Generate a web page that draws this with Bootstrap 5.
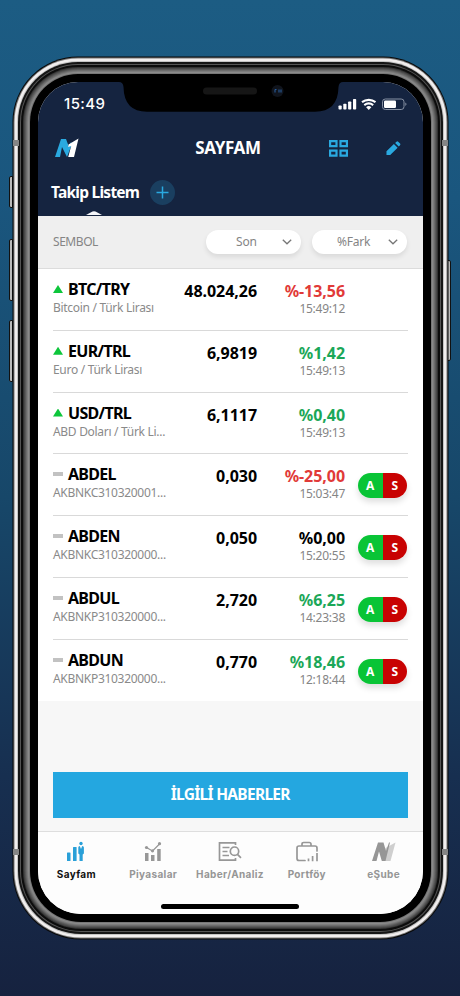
<!DOCTYPE html>
<html lang="tr">
<head>
<meta charset="utf-8">
<meta name="viewport" content="width=device-width, initial-scale=1">
<title>Sayfam</title>
<link href="https://cdn.jsdelivr.net/npm/bootstrap@5.3.0/dist/css/bootstrap.min.css" rel="stylesheet">
<style>
  body { width: 460px; height: 996px; overflow: hidden; font-family: "Noto Sans", "Open Sans", sans-serif; background: linear-gradient(#1c5c83 0, #1a567e 20%, #174769 50%, #172f50 78%, #16223f 100%); }
  .stage { height: 996px; padding: 82px 37.5px 0 38px; }
  .screen { position: relative; z-index: 2; width: 384.5px; height: 832px; border-radius: 40px 40px 43px 43px; overflow: hidden; background: #f7f7f7; }
  .bezel { position: relative; border-radius: 40px 40px 43px 43px; height: 832px; background: #000;
    box-shadow: 0 0 0 8px #000, 0 0 0 9px #777, 0 0 0 10px #8a8a8a, 0 0 0 11px #7c7c7c, 0 0 0 12px #6c6c6c, 0 0 0 13px #5a5a5a, 0 0 0 14px #494949, 0 0 0 15px #333, 0 0 0 17px #0c0c0c, 0 0 0 18px #555, 0 0 0 20px #151515, 0 0 0 21px #c4c4c4, 0 0 0 23.5px #f1eeee, 0 0 0 24.5px #777, 0 0 0 25.5px #080808; }
  .side-key { position: absolute; width: 4px; background: #bbb; border: 1px solid #111; border-radius: 2px 0 0 2px; }
  .side-key.right { border-radius: 0 2px 2px 0; }
  .antenna { position: absolute; width: 6px; height: 6px; background: #858585; z-index: 1; }
  .notch { position: absolute; left: 76px; top: -8px; }
  .topbar { height: 134px; background: #152440; color: #fff; }
  .status { height: 44px; padding: 0 15px 0 26px; }
  .clock { font: 500 15px/20px Inter, sans-serif; letter-spacing: .4px; }
  .title-row { height: 44px; display: grid; grid-template-columns: 1fr auto 1fr; padding: 0 21.5px 0 17px; }
  .page-title { font-weight: 700; font-size: 17px; letter-spacing: -.35px; }
  .actions { gap: 38px; }
  .tab-row { height: 45px; padding-left: 13px; position: relative; }
  .tab-name { font-weight: 700; font-size: 15.5px; letter-spacing: -.75px; width: 88px; white-space: nowrap; }
  .add { width: 25px; height: 25px; margin-left: 11px; border-radius: 50%; background: #1a3f60; }
  .tab-arrow { position: absolute; left: 48px; bottom: 0; }
  .filters { height: 53px; background: #efefef; border-bottom: 1px solid #dcdcdc; padding: 0 15.5px 0 15px; font-size: 12px; color: #858585; }
  .filters > span { letter-spacing: -.45px; }
  .pill { height: 24px; width: 95px; background: #fff; border-radius: 12px; box-shadow: 0 3px 5px rgba(0,0,0,.09); padding: 0 9px 0 30px; }
  .pill + .pill { margin-left: 11px; padding-left: 25px; }
  .pill-text { letter-spacing: -.2px; }
  .quotes { background: #fff; padding: 0 15px; }
  .quote { height: 61.75px; display: grid; grid-template-columns: 119px 85px 88px 62px; border-bottom: 1px solid #d9d9d9; }
  .quote:last-child { border-bottom-color: transparent; }
  .sym { font-weight: 700; font-size: 16px; line-height: 20px; letter-spacing: -.7px; color: #000; gap: 5px; padding-top: 10px; }
  .sub { font-size: 12px; line-height: 18px; letter-spacing: -.3px; color: #8a8a8a; white-space: nowrap; }
  .num { font-weight: 700; font-size: 16px; line-height: 20px; letter-spacing: -.05px; color: #000; padding-top: 12px; text-align: right; white-space: nowrap; }
  .num small { display: block; font-weight: 400; font-size: 12px; line-height: 16px; letter-spacing: -.25px; color: #858585; }
  .num .up { color: #1ba758; } .num .down { color: #e13a38; }
  .tri { width: 10px; height: 8px; background: #0dc63b; clip-path: polygon(50% 0, 100% 100%, 0 100%); }
  .dash { width: 10px; height: 4px; background: #c2c2c2; }
  .trade { width: 49px; height: 25px; margin-top: 19px; border-radius: 13px; overflow: hidden; box-shadow: 0 4px 6px rgba(0,0,0,.13); font-weight: 700; font-size: 12px; line-height: 26px; color: #fff; text-align: center; justify-self: end; }
  .buy { background: #09c436; } .sell { background: #c80202; }
  .news-area { height: 129.75px; padding: 70.5px 15px 0; }
  .news { height: 46.5px; border: 0; border-radius: 0; background: #24a7e0; color: #fff; font-weight: 700; font-size: 15.5px; letter-spacing: -.7px; padding: 0; }
  .tabs { height: 84px; background: #fdfdfd; border-top: 1px solid #dedede; position: relative; }
  .tab { width: 76.8px; padding-top: 9px; font: 700 10px/12px Inter, sans-serif; color: #969696; letter-spacing: .35px; gap: 5px; white-space: nowrap; }
  .tab.on { color: #111; }
  .home { position: absolute; left: 123px; bottom: 6px; width: 138px; height: 5px; border-radius: 3px; background: #000; }
</style>
<script src="https://cdn.jsdelivr.net/npm/bootstrap@5.3.0/dist/js/bootstrap.bundle.min.js"></script>
</head>
<body>
<div class="stage position-relative">
  <i class="side-key" style="left:9px;top:176px;height:32px"></i>
  <i class="side-key" style="left:9px;top:239px;height:62px"></i>
  <i class="side-key" style="left:9px;top:320px;height:62px"></i>
  <i class="side-key right" style="left:447px;top:260px;height:101px"></i>
  <div class="bezel">
    <i class="antenna" style="left:-25px;top:58px"></i><i class="antenna" style="left:404px;top:58px"></i>
    <i class="antenna" style="left:-25px;top:767px"></i><i class="antenna" style="left:404px;top:767px"></i>
    <main class="screen">
      <header class="topbar">
        <div class="status d-flex justify-content-between align-items-center">
          <span class="clock">15:49</span>
          <svg width="71" height="14" viewBox="0 0 71 14" fill="#fff">
            <rect x="1.500" y="8.500" width="3.200" height="4" rx=".8"/><rect x="6.300" y="6.800" width="3.200" height="5.700" rx=".8"/><rect x="11.100" y="4.500" width="3.200" height="8" rx=".8"/><rect x="16" y="2" width="3.200" height="10.500" rx=".8"/>
            <path d="M25 5.200a11 11 0 0 1 13.500 0M27.300 8.100a7.300 7.300 0 0 1 8.900 0" fill="none" stroke="#fff" stroke-width="2.100"/><path d="M31.750 13l-2.600-2.800a4 4 0 0 1 5.200 0z"/>
            <rect x="45.500" y="2" width="21.500" height="10.500" rx="2.800" fill="none" stroke="#8791a3"/><rect x="47" y="3.500" width="12" height="7.500" rx="1.300"/><path d="M68.300 5.500q2.400 1.700 0 3.500z" fill="#8791a3"/>
          </svg>
        </div>
        <div class="title-row align-items-center">
          <svg width="24" height="20" viewBox="0 0 24 20"><path d="M0 19 6 1h5l3 8 2-5 1 2-5 13-5-10-2 10z" fill="#2aa9e0"/><path d="m13.500 6.500 10-6L19 19h-5.800l3-11-3 1z" fill="#fff"/></svg>
          <span class="page-title">SAYFAM</span>
          <span class="actions d-flex justify-content-end align-items-center">
            <svg width="19" height="17" viewBox="0 0 19 17" fill="none" stroke="#2aa9e0" stroke-width="2.200"><path d="M1.100 1.100h6.400v5H1.100zM11.500 1.100h6.400v5h-6.400zM1.100 10.600h6.400v5H1.100zM11.500 10.600h6.400v5h-6.400z"/></svg>
            <svg width="15" height="16" viewBox="0 0 16 16" fill="#2aa9e0"><path d="M.5 15.500V11.500L8.400 3.700l4 4L4.500 15.500zM9.700 2.600l1.500-1.400q.9-.8 1.800 0l2 2q.8.900 0 1.800l-1.400 1.500z"/></svg>
          </span>
        </div>
        <div class="tab-row d-flex align-items-center">
          <span class="tab-name">Takip Listem</span>
          <span class="add d-flex align-items-center justify-content-center"><svg width="13" height="13" viewBox="0 0 13 13" stroke="#2aa9e0" stroke-width="1.500"><path d="M6.500 .5v12M.5 6.500h12"/></svg></span>
          <svg class="tab-arrow" width="16" height="4" viewBox="0 0 16 4"><path d="M0 4 6.500 .6q1.500-.6 3 0L16 4z" fill="#f6f7fa"/></svg>
        </div>
      </header>
      <div class="filters d-flex align-items-center">
        <span class="me-auto">SEMBOL</span>
        <div class="pill d-flex align-items-center justify-content-between"><span class="pill-text">Son</span><svg width="10" height="6" viewBox="0 0 10 6" fill="none" stroke="#777" stroke-width="1.300"><path d="m.8.800 4.200 4 4.200-4"/></svg></div>
        <div class="pill d-flex align-items-center justify-content-between"><span class="pill-text">%Fark</span><svg width="10" height="6" viewBox="0 0 10 6" fill="none" stroke="#777" stroke-width="1.300"><path d="m.8.800 4.200 4 4.200-4"/></svg></div>
      </div>
      <section class="quotes">
        <div class="quote"><div><div class="sym d-flex align-items-center"><i class="tri"></i>BTC/TRY</div><div class="sub">Bitcoin / Türk Lirası</div></div><div class="num">48.024,26</div><div class="num"><span class="down">%-13,56</span><small>15:49:12</small></div></div>
        <div class="quote"><div><div class="sym d-flex align-items-center"><i class="tri"></i>EUR/TRL</div><div class="sub">Euro / Türk Lirası</div></div><div class="num">6,9819</div><div class="num"><span class="up">%1,42</span><small>15:49:13</small></div></div>
        <div class="quote"><div><div class="sym d-flex align-items-center"><i class="tri"></i>USD/TRL</div><div class="sub">ABD Doları / Türk Li...</div></div><div class="num">6,1117</div><div class="num"><span class="up">%0,40</span><small>15:49:13</small></div></div>
        <div class="quote"><div><div class="sym d-flex align-items-center"><i class="dash"></i>ABDEL</div><div class="sub">AKBNKC310320001...</div></div><div class="num">0,030</div><div class="num"><span class="down">%-25,00</span><small>15:03:47</small></div><div class="trade d-flex"><span class="buy w-50">A</span><span class="sell w-50">S</span></div></div>
        <div class="quote"><div><div class="sym d-flex align-items-center"><i class="dash"></i>ABDEN</div><div class="sub">AKBNKC310320000...</div></div><div class="num">0,050</div><div class="num"><span>%0,00</span><small>15:20:55</small></div><div class="trade d-flex"><span class="buy w-50">A</span><span class="sell w-50">S</span></div></div>
        <div class="quote"><div><div class="sym d-flex align-items-center"><i class="dash"></i>ABDUL</div><div class="sub">AKBNKP310320000...</div></div><div class="num">2,720</div><div class="num"><span class="up">%6,25</span><small>14:23:38</small></div><div class="trade d-flex"><span class="buy w-50">A</span><span class="sell w-50">S</span></div></div>
        <div class="quote"><div><div class="sym d-flex align-items-center"><i class="dash"></i>ABDUN</div><div class="sub">AKBNKP310320000...</div></div><div class="num">0,770</div><div class="num"><span class="up">%18,46</span><small>12:18:44</small></div><div class="trade d-flex"><span class="buy w-50">A</span><span class="sell w-50">S</span></div></div>
      </section>
      <div class="news-area"><button class="news btn w-100">İLGİLİ HABERLER</button></div>
      <nav class="tabs d-flex">
        <div class="tab on d-flex flex-column align-items-center"><svg width="22" height="22" viewBox="0 0 22 22" fill="#2aa0d8"><rect x="2" y="11.500" width="3.500" height="8.500" rx=".6"/><rect x="8" y="6" width="3.600" height="14" rx=".6"/><circle cx="16" cy="2.500" r="1.700"/><path d="M13.300 6.500q0-1.500 1.500-1.500l1.200 3 1.200-3q1.700 0 1.700 1.500v6l-1.200 1V20h-3.200v-6.500l-1.200-1z"/></svg>Sayfam</div>
        <div class="tab d-flex flex-column align-items-center"><svg width="22" height="22" viewBox="0 0 22 22" fill="#979797"><rect x="3" y="12" width="3.500" height="8"/><rect x="9" y="14" width="3.500" height="6"/><rect x="15.200" y="8" width="3.500" height="12"/><path d="m4.500 6.500 6 3.500L17.500 3" fill="none" stroke="#979797" stroke-width="1.200"/><circle cx="4.500" cy="6.500" r="1.600"/><circle cx="10.500" cy="9.800" r="1.600"/><circle cx="17.500" cy="2.700" r="1.600"/></svg>Piyasalar</div>
        <div class="tab d-flex flex-column align-items-center"><svg width="24" height="22" viewBox="0 0 24 22" fill="none" stroke="#979797" stroke-width="1.700"><path d="M17.500 4V1.900H1.500v17.200h16V17M4.500 6.500h7M4.500 10.500h5M4.500 14.500h6.500"/><circle cx="16.500" cy="10.200" r="4.200"/><path d="m19.500 13.400 3.500 3.400"/></svg>Haber/Analiz</div>
        <div class="tab d-flex flex-column align-items-center"><svg width="24" height="22" viewBox="0 0 24 22" fill="none" stroke="#979797" stroke-width="1.700"><path d="M10 19.500H4a2 2 0 0 1-2-2V7a2 2 0 0 1 2-2h16a2 2 0 0 1 2 2v3M7 5V3.200Q7 1.500 8.700 1.500h5.600Q16 1.500 16 3.200V5" stroke-linecap="round"/><path d="M13.500 17.500v2.800M17.600 15v5.300M22 12v8.300"/></svg>Portföy</div>
        <div class="tab d-flex flex-column align-items-center"><svg width="24" height="22" viewBox="0 0 24 22"><path d="m13.500 7 10-5.500L18.500 20h-7z" fill="#cfcfcf"/><path d="M0 20 6 1.500h5.500L14 10l3-8.500h1L13.500 20h-3.700L7 10.500 4.500 20z" fill="#969696"/></svg>eŞube</div>
        <div class="home"></div>
      </nav>
      <svg class="notch" width="234" height="39" viewBox="0 0 234 39"><path d="M0 8h5q4 0 4.500 5Q10 37.700 33 37.700h168q23 0 23.500-24.700Q225 8 229 8h5V0H0z" fill="#000"/><rect x="89" y="13.500" width="54" height="7" rx="3.500" fill="#161616"/><circle cx="163.500" cy="17" r="6" fill="#10141c"/><path d="M161 15.500v3M161 15.500h1.500M165 15.500v3M167 15.500v3" stroke="#285c9c" stroke-width="1.100"/></svg>
    </main>
  </div>
</div>
</body>
</html>
